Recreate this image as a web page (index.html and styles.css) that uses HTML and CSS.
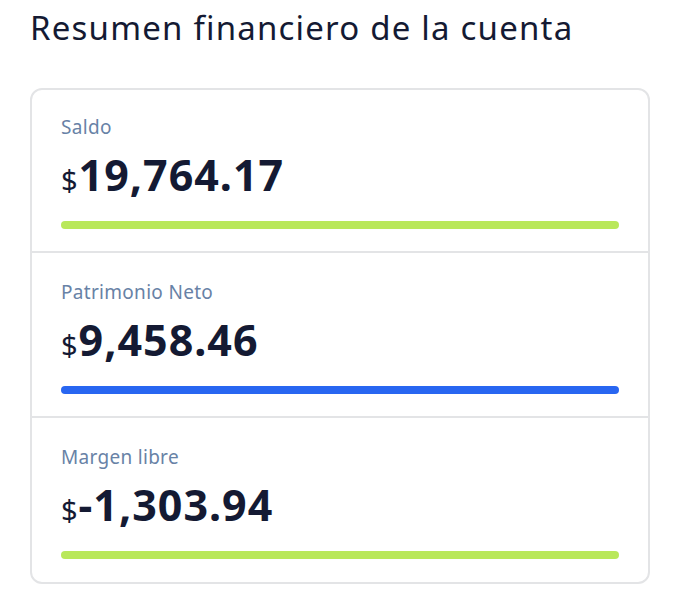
FILE: index.html
```html
<!DOCTYPE html>
<html lang="es">
<head>
  <meta charset="UTF-8">
  <meta name="viewport" content="width=device-width, initial-scale=1.0">
  <title>Resumen financiero</title>
  <link rel="stylesheet" href="styles.css">
</head>
<body>

  <h1 class="title">Resumen financiero de la cuenta</h1>

  <div class="card">
    <!-- Saldo -->
    <div class="row">
      <div class="label">Saldo</div>
      <div class="amount"><span class="cur">$</span>19,764.17</div>
      <div class="bar green"></div>
    </div>

    <!-- Patrimonio -->
    <div class="row">
      <div class="label">Patrimonio Neto</div>
      <div class="amount"><span class="cur">$</span>9,458.46</div>
      <div class="bar blue"></div>
    </div>

    <!-- Margen -->
    <div class="row">
      <div class="label">Margen libre</div>
      <div class="amount"><span class="cur">$</span>-1,303.94</div>
      <div class="bar green"></div>
    </div>
  </div>

</body>
</html>
```

FILE: styles.css
```css
* {
  box-sizing: border-box;
  margin: 0;
  padding: 0;
  font-family: 'Noto Sans', 'Lato', sans-serif;
}
body { background: #ffffff; color: #141a33; padding: 8px 30px 0 30px; }
.title { font-size: 33px; font-weight: 400; line-height: 40px; color: #141a33; margin-bottom: 40px; letter-spacing: 1.2px; }
.card { border: 2px solid #e3e4e6; border-radius: 12px; width: 620px; }
.row { padding: 24px 29px 22px 29px; border-bottom: 2px solid #e3e4e6; }
.row + .row { padding-top: 26px; }
.row:last-child { border-bottom: none; padding-bottom: 23px; }
.label { font-size: 19px; line-height: 26px; color: #6882a6; letter-spacing: 0.3px; }
.amount { font-size: 43px; font-weight: 700; line-height: 50px; margin-top: 10px; color: #141a33; letter-spacing: 1px; }
.cur { font-size: 29px; font-weight: 400; margin-right: 1px; letter-spacing: 0; }
.bar { height: 8px; border-radius: 4px; margin-top: 16px; }
.green { background: #b9e85a; }
.blue { background: #2866f1; }
```
